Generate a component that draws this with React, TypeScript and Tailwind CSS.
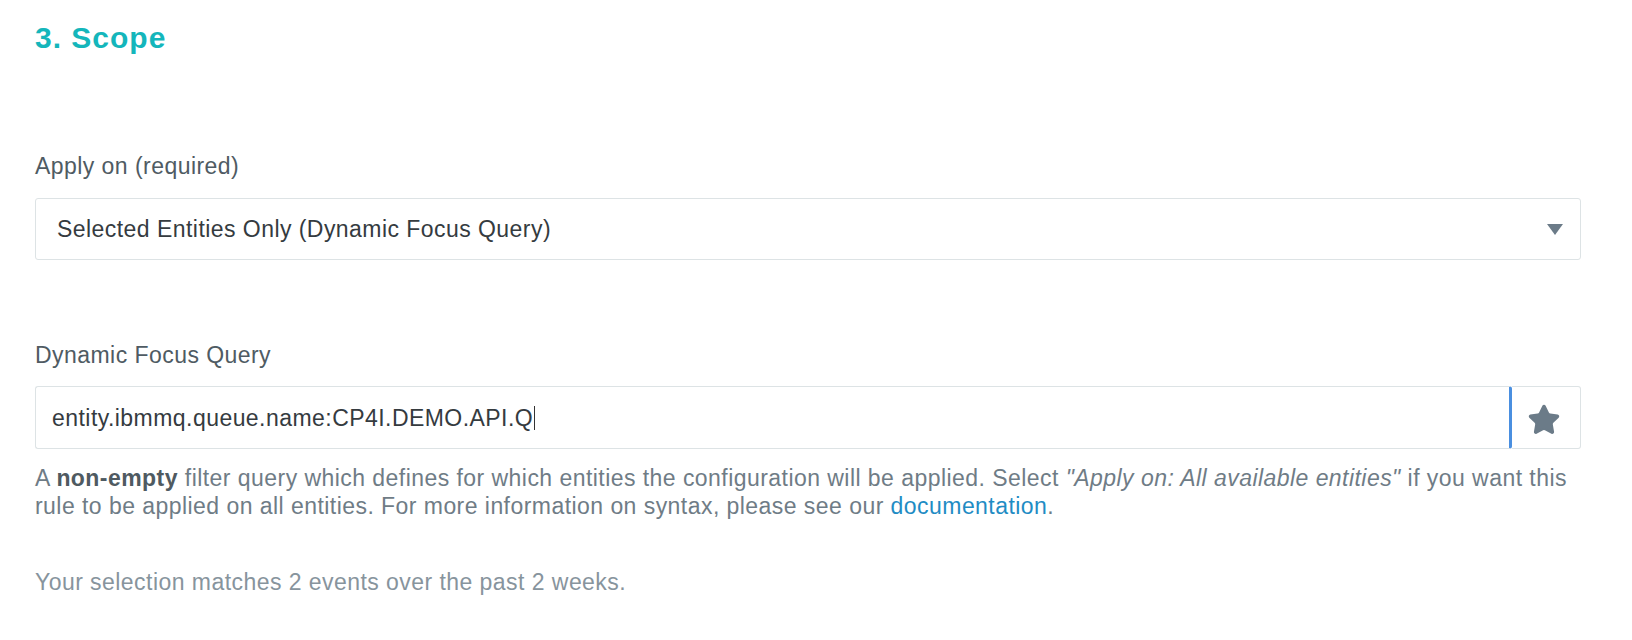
import { Star } from 'lucide-react';

export default function App() {
  return (
    <div
      className="min-h-[640px] bg-white pl-[35px] pr-[51px] pt-[20px] text-[23px] leading-[28px] tracking-[0.45px]"
      style={{ fontFamily: '"Liberation Sans", Arial, sans-serif' }}
    >
      {/* Section title */}
      <h2 className="text-[30px] leading-[36px] font-bold tracking-[1px] text-[#14b6bb]">3. Scope</h2>

      {/* Apply on */}
      <label className="mt-[96px] block text-[#4f5b63]">Apply on (required)</label>
      <div className="mt-[18px] flex h-[62px] items-center justify-between rounded-[3px] border border-[#dde3e5] pl-[21px] pr-[17px]">
        <span className="text-[#353b3f]">Selected Entities Only (Dynamic Focus Query)</span>
        <svg width="16" height="11" viewBox="0 0 16 11" className="mt-[1px]">
          <path d="M0 0 L16 0 L8 11 Z" fill="#6b7b88" />
        </svg>
      </div>

      {/* Dynamic focus query */}
      <label className="mt-[81px] block text-[#4f5b63]">Dynamic Focus Query</label>
      <div className="mt-[17px] flex h-[63px]">
        <div className="flex flex-1 items-center rounded-[3px] border border-[#dde3e5] border-r-[3px] border-r-[#4a8fe0] pl-[16px]">
          <span className="text-[#353b3f]">entity.ibmmq.queue.name:CP4I.DEMO.API.Q</span>
          <span className="ml-[1px] inline-block h-[24px] w-[1px] bg-[#333]" />
        </div>
        <button className="flex w-[69px] items-center justify-center rounded-r-[3px] border border-l-0 border-[#dde3e5]">
          <Star className="mr-[4px] mt-[4px] size-[34px]" fill="#6b7b88" stroke="#6b7b88" strokeWidth={1.5} />
        </button>
      </div>

      <p className="mt-[15px] leading-[28px] text-[#6f7c86]">
        A <b className="font-bold text-[#4f5a61]">non-empty</b> filter query which defines for which entities the
        configuration will be applied. Select <i>"Apply on: All available entities"</i> if you want this rule to be
        applied on all entities. For more information on syntax, please see our{' '}
        <a className="text-[#1f8cc4]">documentation</a>.
      </p>

      <p className="mt-[48px] text-[#87949d]">Your selection matches 2 events over the past 2 weeks.</p>
    </div>
  );
}
